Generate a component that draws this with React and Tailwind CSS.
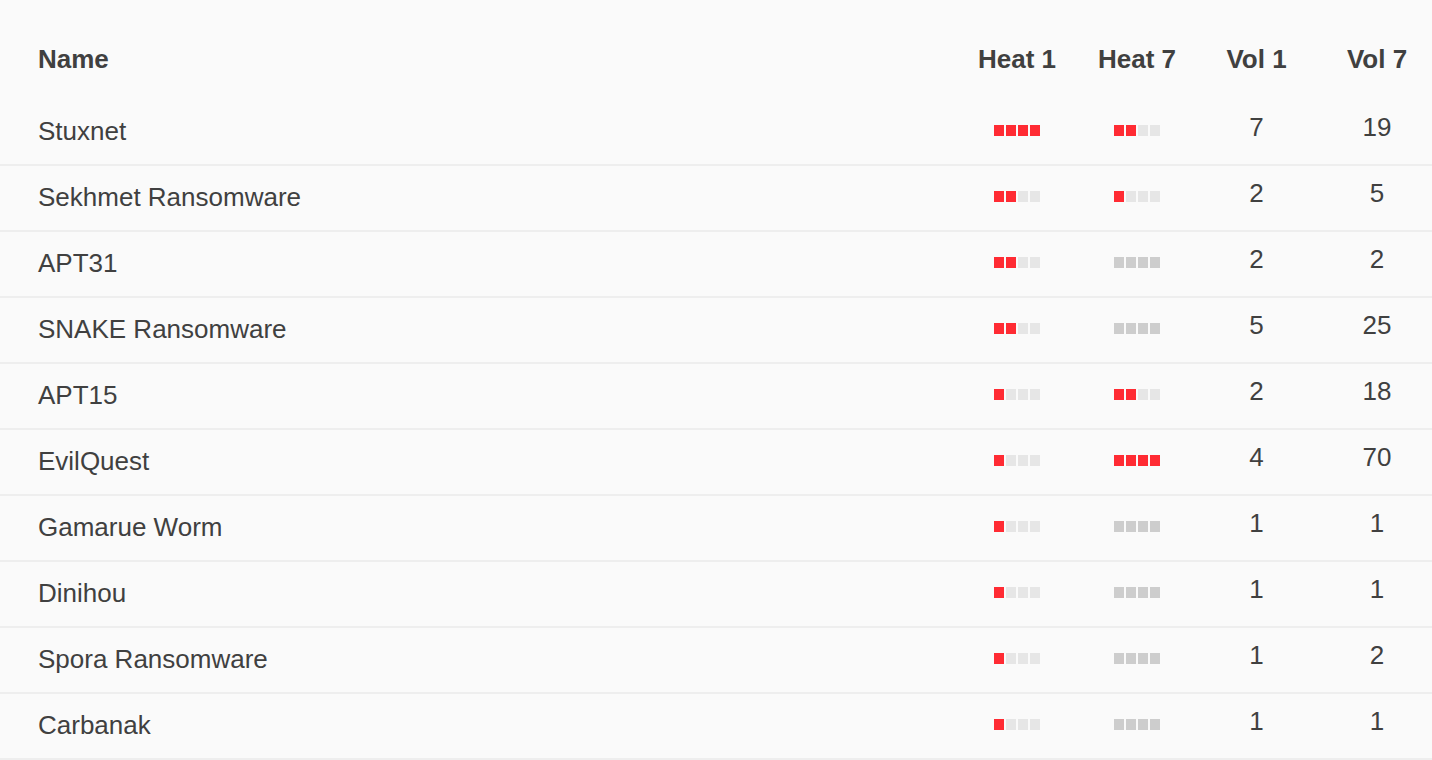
import React from 'react';

const rows = [
  { name: 'Stuxnet', heat1: 4, heat7: 2, vol1: 7, vol7: 19 },
  { name: 'Sekhmet Ransomware', heat1: 2, heat7: 1, vol1: 2, vol7: 5 },
  { name: 'APT31', heat1: 2, heat7: 0, vol1: 2, vol7: 2 },
  { name: 'SNAKE Ransomware', heat1: 2, heat7: 0, vol1: 5, vol7: 25 },
  { name: 'APT15', heat1: 1, heat7: 2, vol1: 2, vol7: 18 },
  { name: 'EvilQuest', heat1: 1, heat7: 4, vol1: 4, vol7: 70 },
  { name: 'Gamarue Worm', heat1: 1, heat7: 0, vol1: 1, vol7: 1 },
  { name: 'Dinihou', heat1: 1, heat7: 0, vol1: 1, vol7: 1 },
  { name: 'Spora Ransomware', heat1: 1, heat7: 0, vol1: 1, vol7: 2 },
  { name: 'Carbanak', heat1: 1, heat7: 0, vol1: 1, vol7: 1 },
];

function Heat({ level }) {
  return (
    <div className="flex gap-[2px]">
      {[0, 1, 2, 3].map((i) => {
        let color = 'bg-[#e6e6e6]';
        if (level === 0) color = 'bg-[#cdcdcd]';
        else if (i < level) color = 'bg-[#ff2b33]';
        return <span key={i} className={`block w-[10px] h-[11px] ${color}`} />;
      })}
    </div>
  );
}

const grid = 'grid grid-cols-[957px_120px_120px_119px_116px]';

export default function App() {
  return (
    <div className="w-[1432px] h-[760px] overflow-hidden bg-[#fafafa] text-[#404040] font-['Liberation_Sans',Arial,sans-serif] text-[26px]">
      <div className={`${grid} h-[100px] pt-[18px] items-center font-bold leading-[30px]`}>
        <div className="pl-[38px]">Name</div>
        <div className="text-center">Heat 1</div>
        <div className="text-center">Heat 7</div>
        <div className="text-center">Vol 1</div>
        <div className="text-center pl-[6px]">Vol 7</div>
      </div>

      {rows.map((r) => (
        <div key={r.name} className={`${grid} h-[66px] items-center border-b-2 border-[#eeeeee] leading-[30px]`}>
          <div className="pl-[38px] pb-[2px]">{r.name}</div>
          <div className="flex justify-center pb-[4px]"><Heat level={r.heat1} /></div>
          <div className="flex justify-center pb-[4px]"><Heat level={r.heat7} /></div>
          <div className="text-center pb-[10px]">{r.vol1}</div>
          <div className="text-center pb-[10px] pl-[6px]">{r.vol7}</div>
        </div>
      ))}
    </div>
  );
}
